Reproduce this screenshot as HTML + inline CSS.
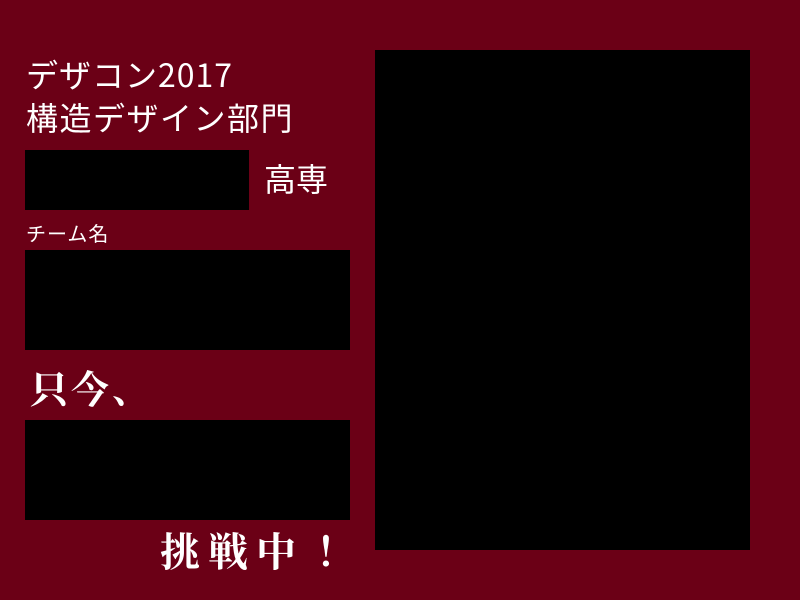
<!DOCTYPE html>
<html><head><meta charset="utf-8"><style>
body{margin:0;width:800px;height:600px;background:#6b0016;position:relative;overflow:hidden;font-family:"Noto Sans CJK JP","Liberation Sans",sans-serif;color:#fff}
.b{position:absolute;background:#000}
.t{position:absolute;white-space:nowrap;line-height:1}
.s{font-family:"Noto Serif CJK SC","Liberation Serif",serif;font-weight:bold}
</style></head><body>
<div class="t" style="left:26px;top:58px;font-size:32px;letter-spacing:1px">デザコン2017</div>
<div class="t" style="left:26px;top:101px;font-size:32px;letter-spacing:1.5px">構造デザイン部門</div>
<div class="b" style="left:25px;top:150px;width:224px;height:60px"></div>
<div class="t" style="left:264px;top:162px;font-size:32px">高専</div>
<div class="t" style="left:26px;top:223px;font-size:20px;letter-spacing:1px">チーム名</div>
<div class="b" style="left:25px;top:250px;width:325px;height:100px"></div>
<div class="t s" style="left:30px;top:368px;font-size:38px;letter-spacing:3px">只今、</div>
<div class="b" style="left:25px;top:420px;width:325px;height:100px"></div>
<div class="t s" style="left:160px;top:530px;font-size:40px;letter-spacing:8px">挑戦中<span style="margin-left:12px">！</span></div>
<div class="b" style="left:375px;top:50px;width:375px;height:500px"></div>
</body></html>
